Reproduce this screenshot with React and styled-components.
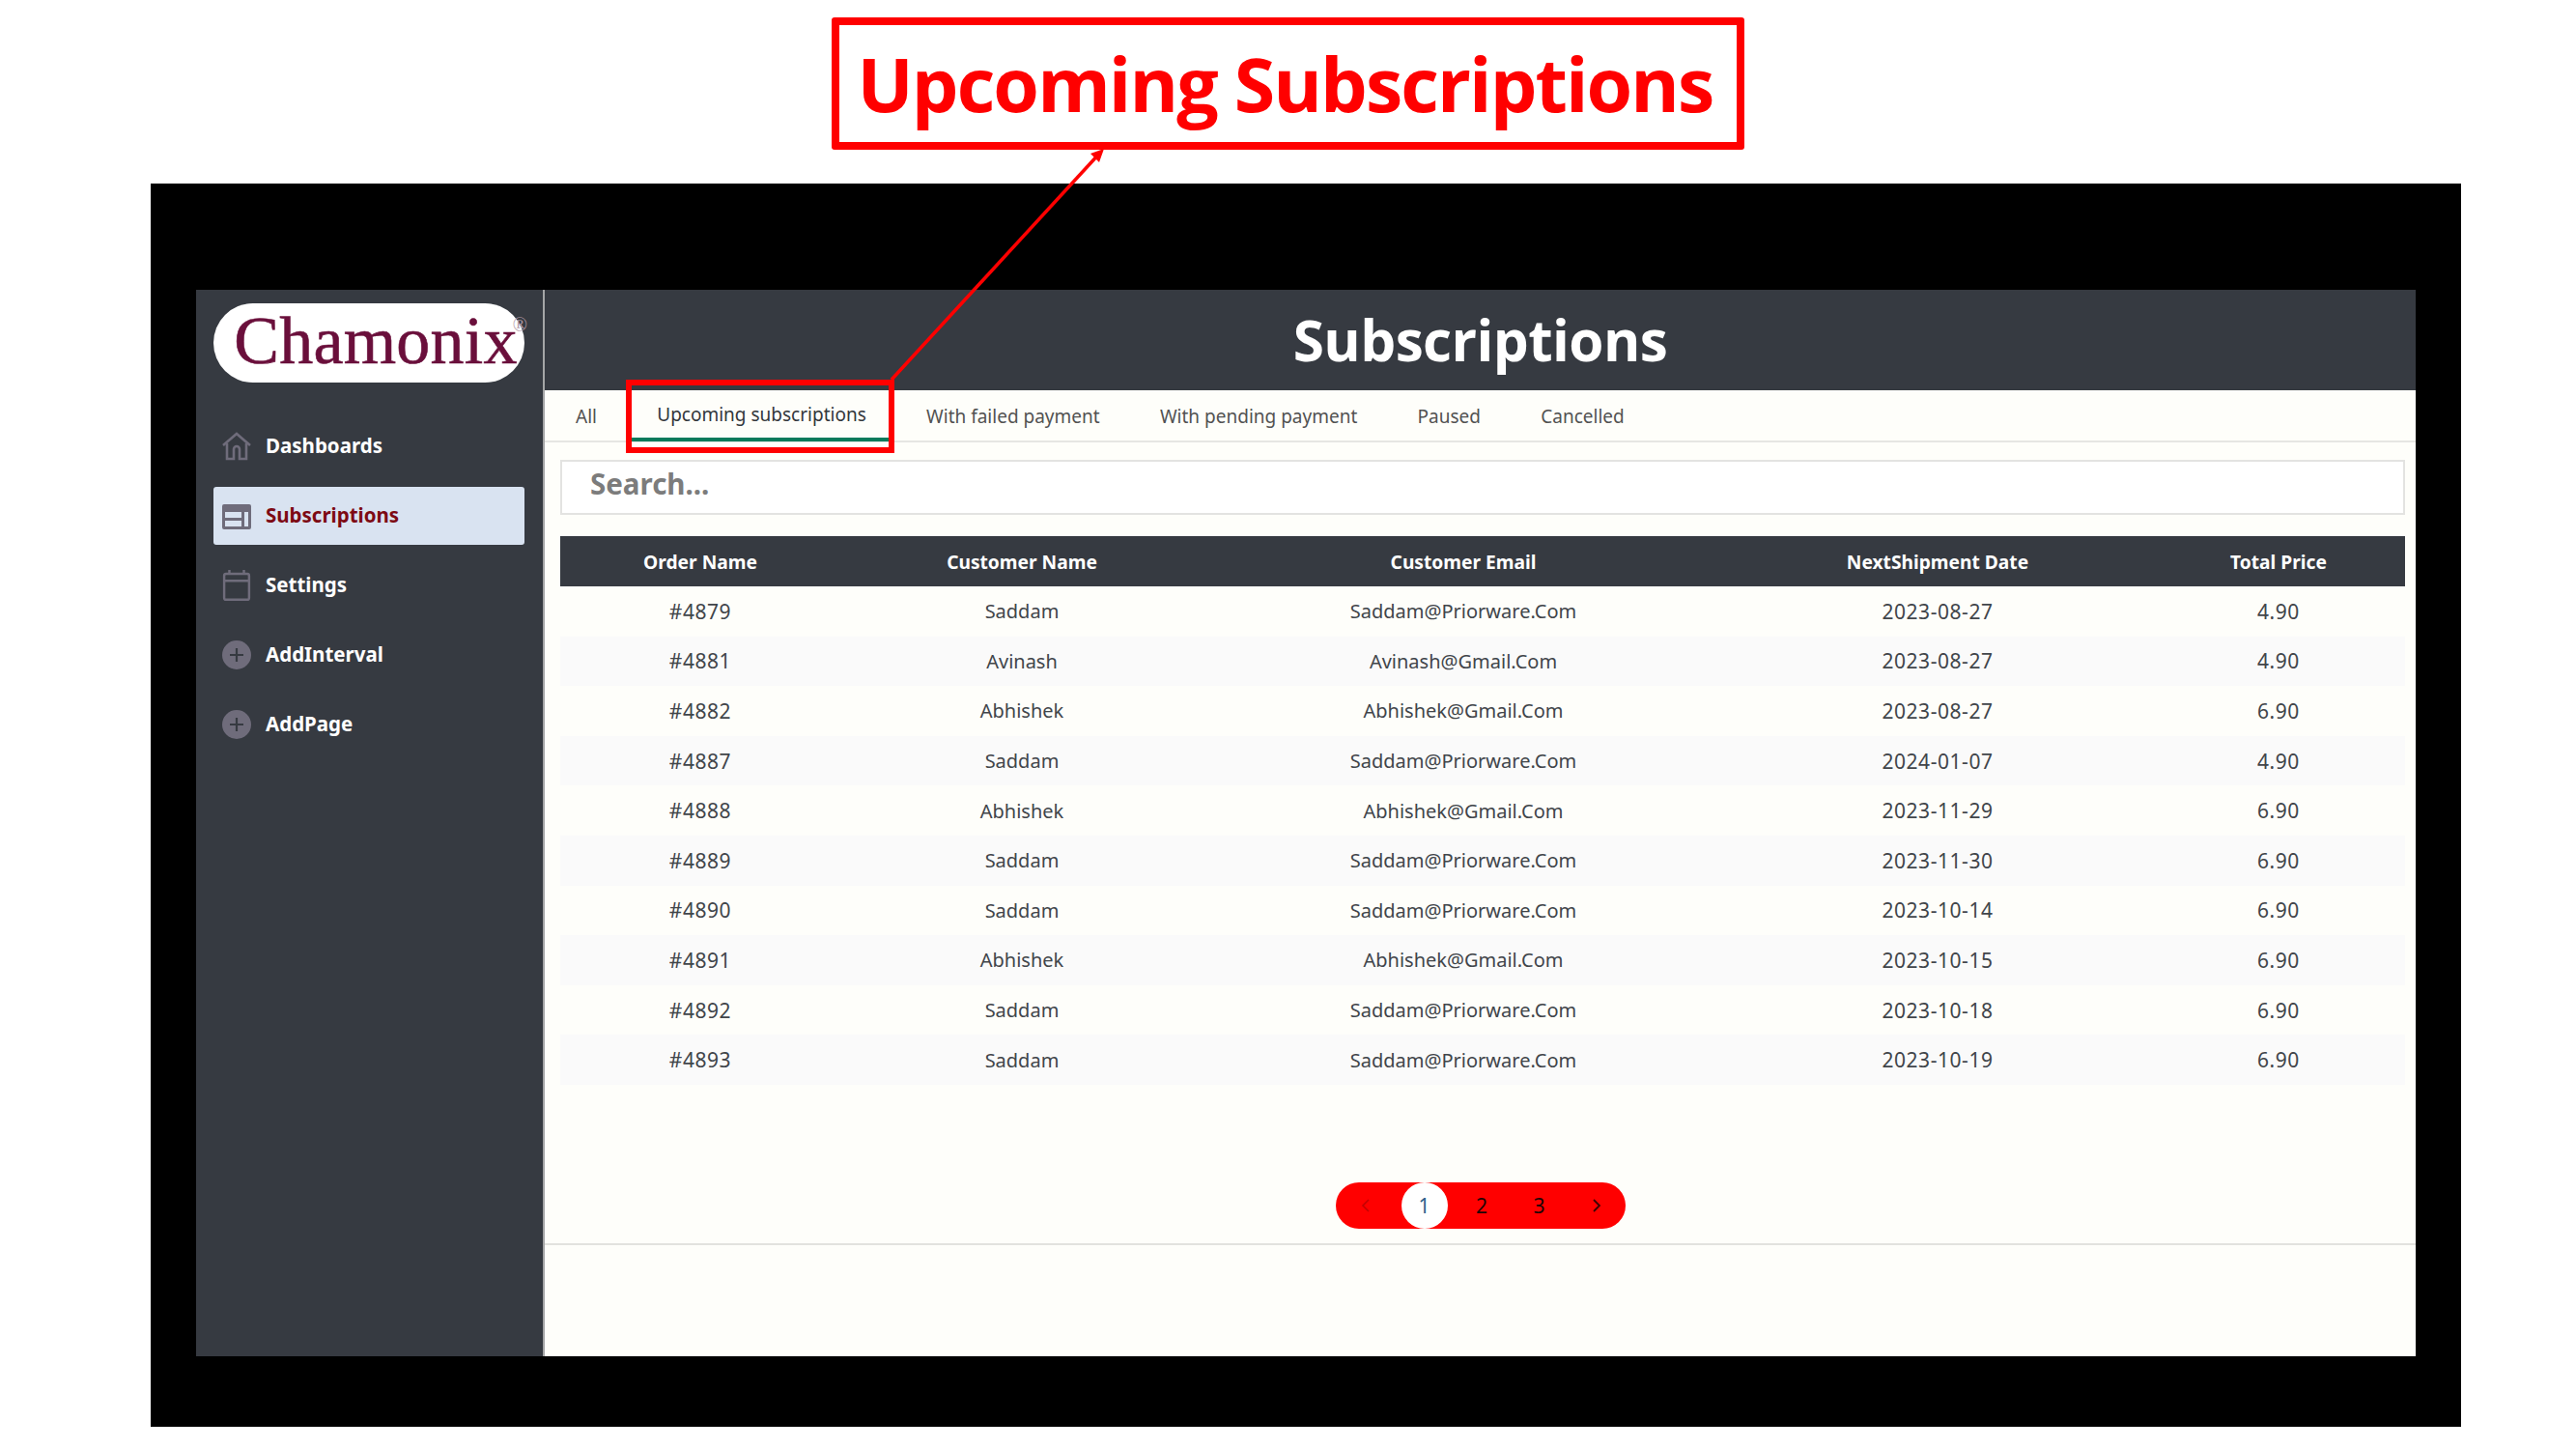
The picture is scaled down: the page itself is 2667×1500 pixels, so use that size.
import React from "react";
import styled, { createGlobalStyle } from "styled-components";

const Global = createGlobalStyle`
  html, body { margin: 0; padding: 0; background: #fff; }
  * { box-sizing: border-box; }
`;

const UI = `"Noto Sans", "Liberation Sans", sans-serif`;

const Page = styled.div`
  position: relative;
  width: 2667px;
  height: 1500px;
  padding-top: 18px;
  overflow: hidden;
  font-family: ${UI};
`;
const Callout = styled.div`
  width: 945px;
  height: 137px;
  margin: 0 auto 35px;
  border: 8px solid #ff0000;
  border-radius: 3px;
  display: flex;
  align-items: center;
  justify-content: center;
  color: #ff0000;
  font: 700 77px "Open Sans", sans-serif;
  letter-spacing: -1.9px;
  white-space: nowrap;
  padding-right: 6px;
`;
const Arrow = styled.svg`
  position: absolute;
  left: 900px;
  top: 140px;
  pointer-events: none;
  z-index: 3;
`;
const Frame = styled.div`
  width: 2392px;
  height: 1287px;
  margin-left: 156px;
  padding: 110px 47px 73px;
  background: #000;
`;
const Shell = styled.div`
  display: flex;
  height: 1104px;
  background: #fefefa;
`;
const Sidebar = styled.aside`
  flex: 0 0 359px;
  background: #363a41;
  padding: 14px 19px 0 18px;
`;
const Logo = styled.div`
  position: relative;
  height: 82px;
  margin-bottom: 36px;
  padding-left: 14px;
  background: #fff;
  border-radius: 41px;
  color: #6a0f3b;
  font: 400 70px/78px "Liberation Serif", serif;
  letter-spacing: 0.2px;
  text-align: center;
  -webkit-text-stroke: 0.6px #6a0f3b;
`;
const LogoMark = styled.span`
  position: absolute;
  right: -3px;
  top: 12px;
  font-size: 20px;
  line-height: 20px;
  letter-spacing: 0;
  color: #b49aa8;
  -webkit-text-stroke: 0;
`;
const Nav = styled.nav`
  display: flex;
  flex-direction: column;
  gap: 12px;
`;
const NavItem = styled.a`
  display: flex;
  align-items: center;
  gap: 15px;
  height: 60px;
  padding-left: 9px;
  border-radius: 3px;
  background: ${(p) => (p.$active ? "#d9e3f1" : "transparent")};
  color: ${(p) => (p.$active ? "#7d0a14" : "#fff")};
  font-size: 20.5px;
  font-weight: 700;
`;
const NavLabel = styled.span`
  position: relative;
  top: -1px;
`;
const IconBox = styled.svg`
  flex: 0 0 30px;
  width: 30px;
  height: 32px;
  color: #6f6c7b;
`;
const Main = styled.main`
  flex: 1;
  display: flex;
  flex-direction: column;
  border-left: 2px solid #a4a5a6;
`;
const Header = styled.header`
  height: 104px;
  flex: none;
  background: #363a41;
  color: #fff;
  display: flex;
  align-items: center;
  justify-content: center;
  font: 700 58.5px "Open Sans", sans-serif;
  letter-spacing: -0.6px;
  padding-bottom: 3px;
`;
const Tabs = styled.div`
  display: flex;
  gap: 12.3px;
  height: 54px;
  padding: 1px 0 0 7px;
  border-bottom: 2px solid #e6e6e3;
  flex: none;
`;
const Tab = styled.div`
  position: relative;
  padding: ${(p) => (p.$active ? "0 25px 4px" : "0 25px")};
  display: flex;
  align-items: center;
  font-size: 19px;
  color: ${(p) => (p.$active ? "#33373c" : "#525252")};
  white-space: nowrap;
  ${(p) =>
    p.$active &&
    `
    &::before {
      content: "";
      position: absolute;
      left: -2px; right: 0; bottom: -1px;
      height: 4px;
      background: #087a5b;
    }
    &::after {
      content: "";
      position: absolute;
      left: -7px; right: -4px; top: -12px; bottom: -13px;
      border: 6px solid #ff0000;
    }
  `}
`;
const Content = styled.div`
  flex: 1;
  display: flex;
  flex-direction: column;
  padding: 18px 11px 0 16px;
`;
const Search = styled.div`
  height: 57px;
  flex: none;
  border: 2px solid #e3e3e1;
  background: #fff;
  display: flex;
  align-items: center;
  padding: 0 0 9px 29px;
  color: #7c7c7c;
  font-size: 29.5px;
  font-weight: 700;
`;
const Table = styled.div`
  margin-top: 22px;
  flex: none;
`;
const Row = styled.div`
  display: grid;
  grid-template-columns: 290px 376px 538px 444px 262px;
  height: ${(p) => (p.$head ? "52px" : "51.6px")};
  align-items: center;
  text-align: center;
  font-size: ${(p) => (p.$head ? "19.2px" : "20px")};
  font-weight: ${(p) => (p.$head ? 700 : 400)};
  color: ${(p) => (p.$head ? "#fff" : "#41454a")};
  background: ${(p) => (p.$head ? "#363a41" : p.$alt ? "#fafafa" : "transparent")};
`;
const Cell = styled.span`
  font-size: ${(p) => (p.$num ? "21px" : "inherit")};
  letter-spacing: ${(p) => (p.$num ? "0.55px" : "0")};
`;
const PagerWrap = styled.div`
  display: flex;
  justify-content: center;
  margin-top: 101px;
  padding-right: 4px;
`;
const Pager = styled.div`
  display: grid;
  grid-template-columns: 62px 59px 60px 59px 60px;
  width: 300px;
  height: 48px;
  border-radius: 24px;
  background: #ff0000;
  align-items: center;
  justify-items: center;
  font-size: 21px;
  color: #1c0505;
`;
const PageNum = styled.span`
  width: 48px;
  height: 48px;
  border-radius: 50%;
  display: flex;
  align-items: center;
  justify-content: center;
  background: ${(p) => (p.$active ? "#fff" : "transparent")};
  color: ${(p) => (p.$active ? "#2e5f8a" : "inherit")};
`;
const Chevron = styled.svg`
  width: 12px;
  height: 16px;
  opacity: ${(p) => (p.$muted ? 0.35 : 1)};
`;
const Rule = styled.div`
  height: 2px;
  margin: 15px -11px 0 -16px;
  background: #e2e2de;
`;

const HomeIcon = () => (
  <IconBox viewBox="0 0 30 32" fill="none" stroke="currentColor" strokeWidth="2.6">
    <path d="M1 15 15 3l14 12" />
    <path d="M5 13v16h7V19a3 3 0 0 1 6 0v10h7V13" />
  </IconBox>
);
const PanelIcon = () => (
  <IconBox viewBox="0 0 30 32">
    <path
      fill="currentColor"
      fillRule="evenodd"
      d="M2 4h26a2 2 0 0 1 2 2v22a2 2 0 0 1-2 2H2a2 2 0 0 1-2-2V6a2 2 0 0 1 2-2ZM3 12v6h17v-6H3Zm0 9v6h17v-6H3Zm20-9v15h4V12h-4Z"
    />
  </IconBox>
);
const CalendarIcon = () => (
  <IconBox viewBox="0 0 30 34" fill="none" stroke="currentColor" strokeWidth="2.6">
    <rect x="1.3" y="4.3" width="27.4" height="28.4" rx="2" />
    <path d="M1.3 12h27.4M7 0v5M23 0v5" />
  </IconBox>
);
const PlusIcon = () => (
  <IconBox viewBox="0 0 30 30">
    <circle cx="15" cy="15" r="15" fill="currentColor" />
    <path d="M15 8v14M8 15h14" stroke="#363a41" strokeWidth="2.2" />
  </IconBox>
);

const nav = [
  ["Dashboards", HomeIcon],
  ["Subscriptions", PanelIcon, true],
  ["Settings", CalendarIcon],
  ["AddInterval", PlusIcon],
  ["AddPage", PlusIcon],
];
const tabs = ["All", "Upcoming subscriptions", "With failed payment", "With pending payment", "Paused", "Cancelled"];
const S = ["Saddam", "Saddam@Priorware.Com"];
const A = ["Abhishek", "Abhishek@Gmail.Com"];
const rows = [
  ["#4879", ...S, "2023-08-27", "4.90"],
  ["#4881", "Avinash", "Avinash@Gmail.Com", "2023-08-27", "4.90"],
  ["#4882", ...A, "2023-08-27", "6.90"],
  ["#4887", ...S, "2024-01-07", "4.90"],
  ["#4888", ...A, "2023-11-29", "6.90"],
  ["#4889", ...S, "2023-11-30", "6.90"],
  ["#4890", ...S, "2023-10-14", "6.90"],
  ["#4891", ...A, "2023-10-15", "6.90"],
  ["#4892", ...S, "2023-10-18", "6.90"],
  ["#4893", ...S, "2023-10-19", "6.90"],
];

export default function App() {
  return (
    <Page>
      <Global />
      <Callout>Upcoming Subscriptions</Callout>
      <Arrow width="260" height="270" viewBox="0 0 260 270" fill="none">
        <path d="M23 253 240 17" stroke="#ff0000" strokeWidth="3.5" />
        <path d="M243 14l-14 5 9 9z" fill="#ff0000" />
      </Arrow>
      <Frame>
        <Shell>
          <Sidebar>
            <Logo>
              Chamonix<LogoMark>®</LogoMark>
            </Logo>
            <Nav>
              {nav.map(([label, Icon, active]) => (
                <NavItem key={label} $active={active}>
                  <Icon />
                  <NavLabel>{label}</NavLabel>
                </NavItem>
              ))}
            </Nav>
          </Sidebar>
          <Main>
            <Header>Subscriptions</Header>
            <Tabs>
              {tabs.map((t, i) => (
                <Tab key={t} $active={i === 1}>
                  {t}
                </Tab>
              ))}
            </Tabs>
            <Content>
              <Search>Search...</Search>
              <Table>
                <Row $head>
                  <span>Order Name</span>
                  <span>Customer Name</span>
                  <span>Customer Email</span>
                  <span>NextShipment Date</span>
                  <span>Total Price</span>
                </Row>
                {rows.map((r, i) => (
                  <Row key={r[0]} $alt={i % 2 === 1}>
                    {r.map((c, j) => (
                      <Cell key={j} $num={j === 0 || j >= 3}>
                        {c}
                      </Cell>
                    ))}
                  </Row>
                ))}
              </Table>
              <PagerWrap>
                <Pager>
                  <Chevron $muted viewBox="0 0 12 16" fill="none" stroke="#5a0505" strokeWidth="1.6">
                    <path d="M9 2 3 8l6 6" />
                  </Chevron>
                  <PageNum $active>1</PageNum>
                  <PageNum>2</PageNum>
                  <PageNum>3</PageNum>
                  <Chevron viewBox="0 0 12 16" fill="none" stroke="#3a0303" strokeWidth="1.8">
                    <path d="m3 2 6 6-6 6" />
                  </Chevron>
                </Pager>
              </PagerWrap>
              <Rule />
            </Content>
          </Main>
        </Shell>
      </Frame>
    </Page>
  );
}
